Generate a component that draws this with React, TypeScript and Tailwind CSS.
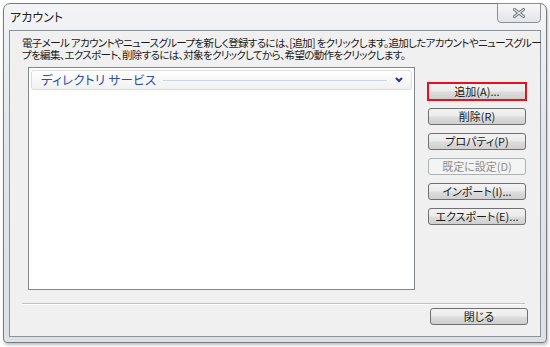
import React from "react";

const jp = "font-['Meiryo_UI','Noto_Sans_CJK_JP',sans-serif] [font-feature-settings:'palt']";

function WinButton({ label, disabled, highlight }: { label: string; disabled?: boolean; highlight?: boolean }) {
  const base = "flex h-[17px] w-[98px] items-center justify-center rounded-[3px] text-[11px] leading-none";
  if (disabled) {
    return <div className={`${base} border border-[#adb2b5] bg-[#f4f4f4] text-[#8d8d8d]`}>{label}</div>;
  }
  return (
    <div
      className={`${base} border border-[#707070] bg-[linear-gradient(to_bottom,#f3f3f3_0%,#ebebeb_48%,#dddddd_52%,#cfcfcf_100%)] text-[#1a1a1a] ${
        highlight ? "outline-2 outline-[#e8101c] outline-offset-[-1px] rounded-none" : ""
      }`}
    >
      {label}
    </div>
  );
}

export default function App() {
  return (
    <div className={`h-[347px] w-[550px] bg-white pl-[3px] pt-[3px] ${jp}`}>
      <div className="flex h-[340px] w-[544px] flex-col rounded-t-[7px] rounded-b-[4px] border border-[#767b82] bg-[linear-gradient(to_bottom,#f2f4f6,#e2e5e9_40%,#dde1e6)] shadow-[1px_2px_3px_rgba(0,0,0,0.25)]">
        {/* title bar */}
        <div className="relative flex h-[26px] shrink-0 items-center pl-[6px]">
          <span className="text-[12px] text-[#1e1e1e]">アカウント</span>
          <div className="absolute right-[5px] top-[-1px] flex h-[20px] w-[44px] items-center justify-center rounded-b-[4px] border border-[#8c9096] bg-[linear-gradient(to_bottom,#f6f7f8,#e2e5e8)]">
            <svg width="12" height="10" viewBox="0 0 12 10">
              <path d="M1.5 1.5 L10.5 8.5 M10.5 1.5 L1.5 8.5" stroke="#6f747a" strokeWidth="3" strokeLinecap="square" />
              <path d="M1.5 1.5 L10.5 8.5 M10.5 1.5 L1.5 8.5" stroke="#e9ebee" strokeWidth="1.2" strokeLinecap="square" />
            </svg>
          </div>
        </div>

        {/* client area */}
        <div className="mx-[5px] mb-[5px] flex flex-1 flex-col border border-[#8d9198] bg-[#f0f0f0]">
          <div className="pl-[12px] pt-[6px] text-[10.5px] leading-[12px] tracking-[-0.65px] text-[#1a1a1a] whitespace-nowrap">
            <p>電子メール アカウントやニュースグループを新しく登録するには、[追加] をクリックします。追加したアカウントやニュースグルー</p>
            <p>プを編集、エクスポート、削除するには、対象をクリックしてから、希望の動作をクリックします。</p>
          </div>

          <div className="mt-[6px] flex pl-[18px]">
            <div className="h-[223px] w-[387px] border border-[#828790] bg-white p-[2px]">
              <div className="flex h-[20px] items-center rounded-[3px] border border-[#dcdcdc] bg-[linear-gradient(to_bottom,#ffffff,#f1f1f1)] pl-[9px] pr-[8px]">
                <span className="text-[12.5px] tracking-[0.3px] text-[#2c4fa8]">ディレクトリ&nbsp;サービス</span>
                <div className="ml-[7px] h-px flex-1 bg-[#cdd5e4]" />
                <svg className="ml-[8px]" width="8" height="6" viewBox="0 0 8 6">
                  <path d="M1 1 L4 4 L7 1" stroke="#1c3689" strokeWidth="2" fill="none" />
                </svg>
              </div>
            </div>

            <div className="ml-[13px] flex flex-col gap-[8px] pt-[16px]">
              <WinButton label="追加(A)..." highlight />
              <WinButton label="削除(R)" />
              <WinButton label="プロパティ(P)" />
              <WinButton label="既定に設定(D)" disabled />
              <WinButton label="インポート(I)..." />
              <WinButton label="エクスポート(E)..." />
            </div>
          </div>

          <div className="ml-[12px] mt-[13px] w-[503px] border-t border-b border-t-[#c2c2c2] border-b-white" />

          <div className="mt-[3px] flex justify-end pr-[12px]">
            <WinButton label="閉じる" />
          </div>
        </div>
      </div>
    </div>
  );
}
